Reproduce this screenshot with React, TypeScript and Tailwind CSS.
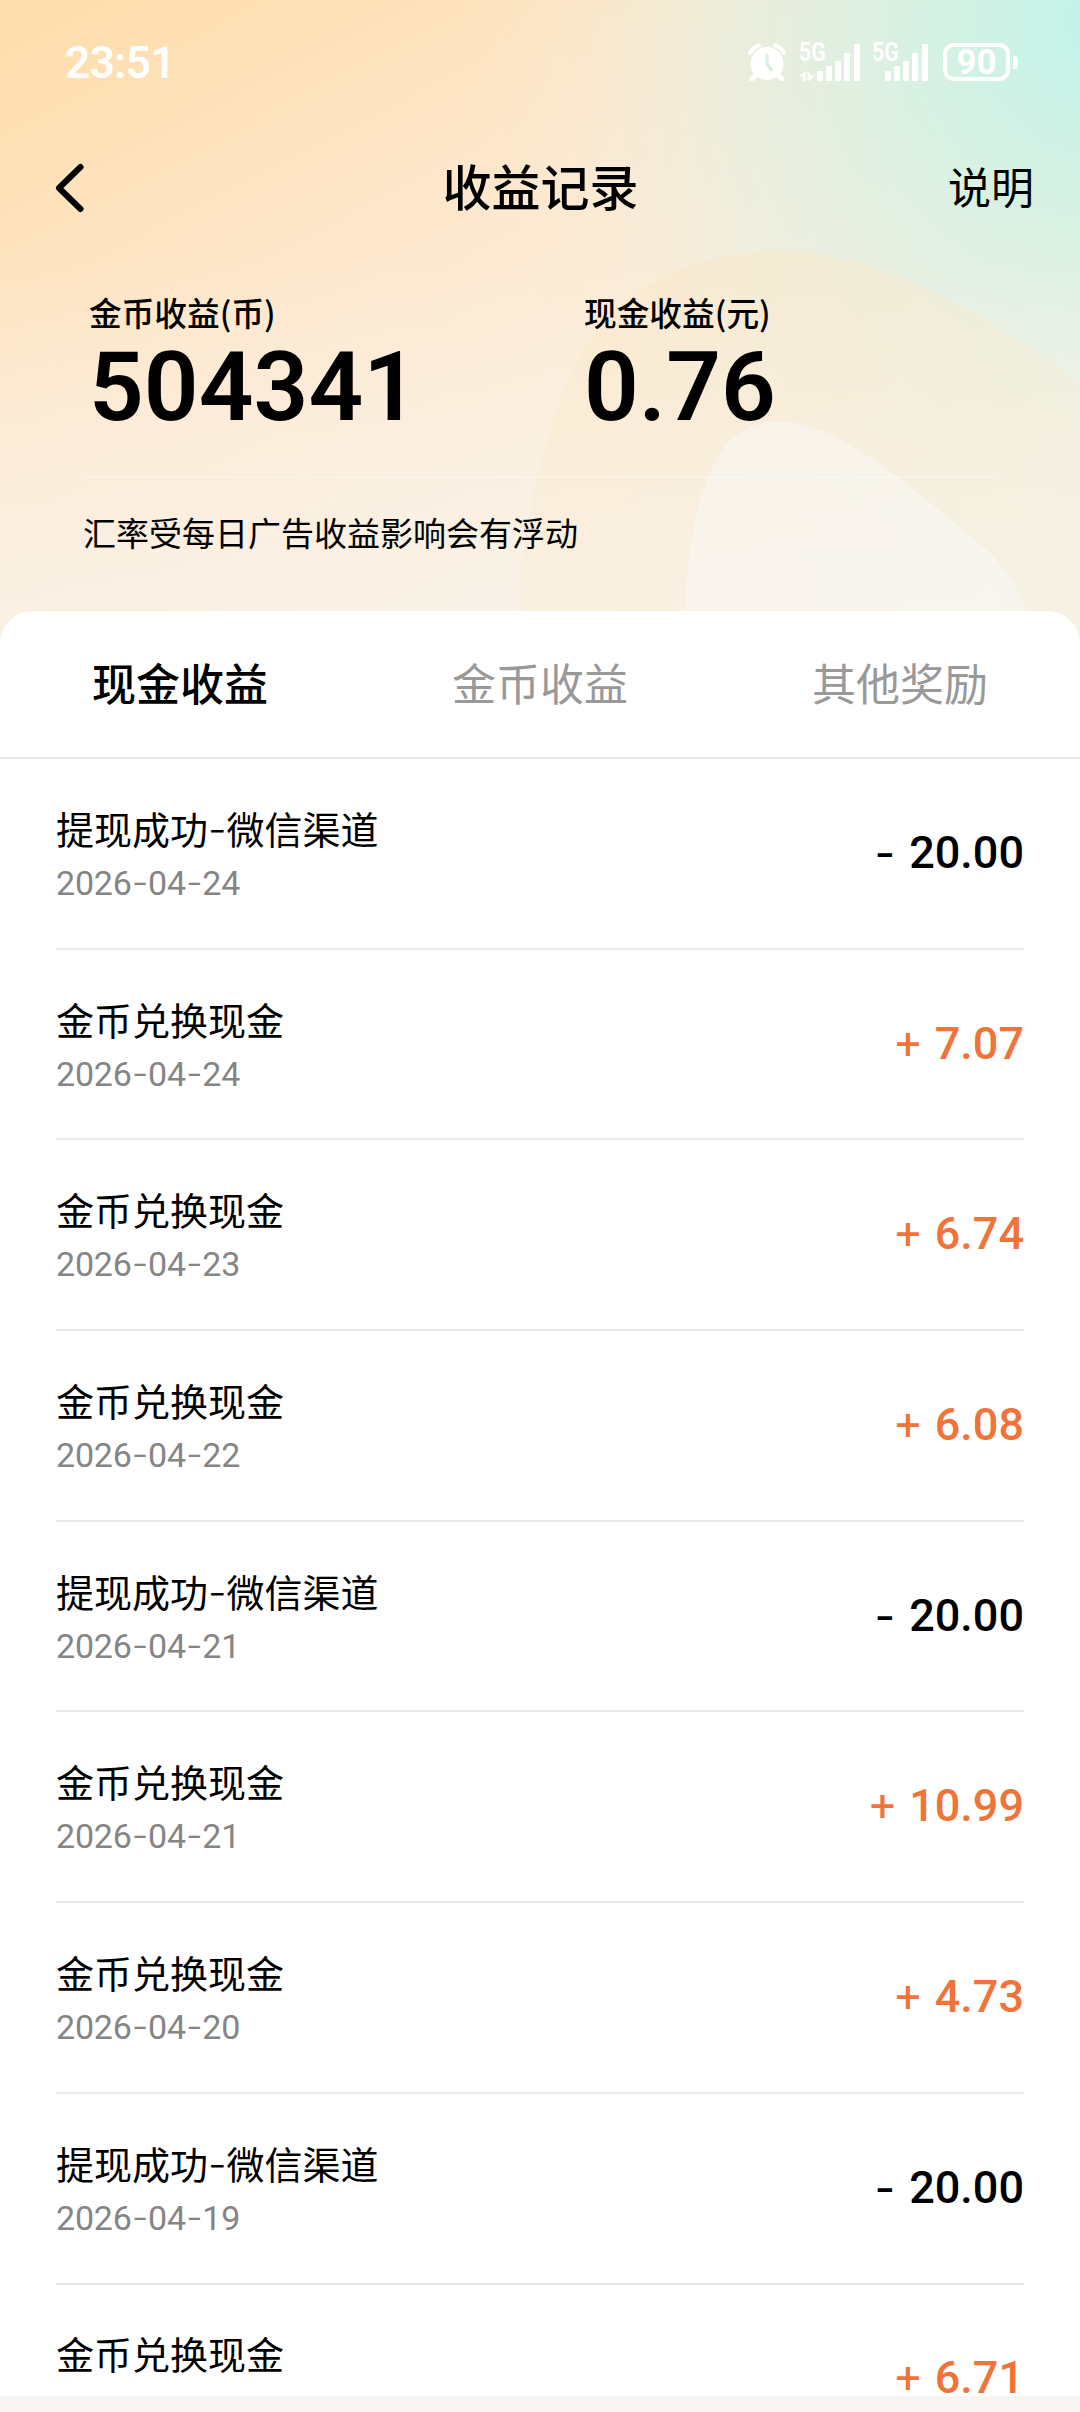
import { Fragment } from "react";
import clsx from "clsx";

type RecordItem = {
    title: string;
    date: string;
    amount: string;
    income: boolean;
};

const tabs = ["现金收益", "金币收益", "其他奖励"];

const records: RecordItem[] = [
    { title: "提现成功-微信渠道", date: "2026-04-24", amount: "20.00", income: false },
    { title: "金币兑换现金", date: "2026-04-24", amount: "7.07", income: true },
    { title: "金币兑换现金", date: "2026-04-23", amount: "6.74", income: true },
    { title: "金币兑换现金", date: "2026-04-22", amount: "6.08", income: true },
    { title: "提现成功-微信渠道", date: "2026-04-21", amount: "20.00", income: false },
    { title: "金币兑换现金", date: "2026-04-21", amount: "10.99", income: true },
    { title: "金币兑换现金", date: "2026-04-20", amount: "4.73", income: true },
    { title: "提现成功-微信渠道", date: "2026-04-19", amount: "20.00", income: false },
    { title: "金币兑换现金", date: "2026-04-19", amount: "6.71", income: true },
];

// Inter has the wider hyphen, the rest keeps the parent font
function Hyphenated({ text }: { text: string }) {
    return (
        <>
            {text.split("-").map((part, i) => (
                <Fragment key={i}>
                    {i > 0 && <span className="font-[Inter,sans-serif] text-[1.08em] leading-none font-light">-</span>}
                    {part}
                </Fragment>
            ))}
        </>
    );
}

function Signal({ data }: { data?: boolean }) {
    return (
        <div className={clsx("relative flex h-[37px] justify-end", data ? "w-[61px]" : "w-[56px]")}>
            {data && (
                <svg viewBox="0 0 16 10" className="absolute bottom-0 left-0 h-[10px] w-[16px]" fill="currentColor">
                    <path d="M0 5.500L6.500 0v10H4V5.500zM8.500 0v10h1.500l6-5.500h-3z" />
                </svg>
            )}
            <svg viewBox="0 0 43 37" className="h-[37px] w-[43px]" fill="currentColor">
                <rect x="0" y="27" width="6" height="10" rx="1" />
                <rect x="9" y="22" width="6" height="15" rx="1" />
                <rect x="18" y="17" width="6" height="20" rx="1" />
                <rect x="27" y="9" width="6" height="28" rx="1" />
                <rect x="37" y="0" width="6" height="37" rx="1" />
            </svg>
            <span className="absolute -top-px left-0 origin-left scale-x-[0.85] text-[25px] leading-[20px] font-bold">
                5G
            </span>
        </div>
    );
}

function StatusBar() {
    return (
        <div className="flex h-[124px] items-center justify-between pr-[62px] pl-[65px] text-white">
            <span className="pt-[2px] text-[44px] leading-none font-semibold tracking-[-0.500px]">23:51</span>
            <div className="flex items-center">
                <svg viewBox="0 0 38 38" className="mr-[13px] h-[38px] w-[38px]" fill="none" stroke="currentColor">
                    <circle cx="19" cy="20.500" r="16.500" fill="currentColor" stroke="none" />
                    <path d="M2 10Q5 4 11 2.500M27 2.500Q33 4 36 10" strokeWidth="4" strokeLinecap="round" />
                    <path d="M8 32l-4 4M30 32l4 4" strokeWidth="5" strokeLinecap="round" />
                    <path d="M19 12v9l4.500 6" stroke="#d9efdf" strokeWidth="3" strokeLinecap="round" />
                </svg>
                <div className="mr-[12px]">
                    <Signal data />
                </div>
                <div className="mr-[15px]">
                    <Signal />
                </div>
                <div className="flex h-[38px] w-[67px] items-center justify-center rounded-[11px] border-[4px] border-white text-[35px] leading-none font-bold">
                    90
                </div>
                <div className="ml-[3px] h-[13px] w-[5px] rounded-r-[3px] bg-white" />
            </div>
        </div>
    );
}

function HeaderBackdrop() {
    return (
        <svg
            viewBox="0 0 1080 660"
            className="absolute inset-x-0 top-0 h-[660px] w-[1080px]"
            fill="none"
        >
            <defs>
                <linearGradient id="base" x1="80" y1="0" x2="420" y2="660" gradientUnits="userSpaceOnUse">
                    <stop offset="0" stopColor="#ffdead" />
                    <stop offset="0.500" stopColor="#fde8ce" />
                    <stop offset="1" stopColor="#faf1e4" />
                </linearGradient>
                <radialGradient id="mint" cx="0" cy="0" r="1" gradientUnits="userSpaceOnUse" gradientTransform="translate(1110 20) rotate(90) scale(640 640)">
                    <stop offset="0" stopColor="#c0f3ec" />
                    <stop offset="0.300" stopColor="#d2f2e4" stopOpacity="0.900" />
                    <stop offset="0.600" stopColor="#e3f0e4" stopOpacity="0.650" />
                    <stop offset="0.850" stopColor="#f2eedd" stopOpacity="0.220" />
                    <stop offset="1" stopColor="#f8ebd6" stopOpacity="0" />
                </radialGradient>
                <linearGradient id="hill" x1="600" y1="400" x2="1080" y2="400" gradientUnits="userSpaceOnUse">
                    <stop offset="0" stopColor="#fae8c9" stopOpacity="0.650" />
                    <stop offset="1" stopColor="#f0ecd6" stopOpacity="0.700" />
                </linearGradient>
                <linearGradient id="floor" x1="0" y1="260" x2="0" y2="640" gradientUnits="userSpaceOnUse">
                    <stop offset="0" stopColor="#f9f3ea" stopOpacity="0" />
                    <stop offset="1" stopColor="#f9f3ea" stopOpacity="0.700" />
                </linearGradient>
            </defs>
            <path fill="url(#base)" d="M0 0h1080v660H0z" />
            <path fill="url(#mint)" d="M0 0h1080v660H0z" />
            <path
                fill="url(#hill)"
                d="M515 660C518 560 532 460 576 362C620 280 700 251 785 251C870 253 975 305 1080 383V660Z"
            />
            <path fill="url(#floor)" d="M0 0h1080v660H0z" />
            <path
                fill="#fafafa"
                fillOpacity="0.500"
                d="M685 660C683 570 692 500 722 450C740 426 762 420 785 421C845 428 905 482 978 542C1012 572 1030 600 1034 660Z"
            />
        </svg>
    );
}

function Stat({ label, value }: { label: string; value: string }) {
    return (
        <div className="w-[495px]">
            <div className="font-['Noto_Sans_CJK_SC',sans-serif] text-[32.700px] leading-[40px] font-medium">{label}</div>
            <div className="mt-[5px] text-[96px] leading-[100px] font-semibold">{value}</div>
        </div>
    );
}

function RecordRow({ item }: { item: RecordItem }) {
    return (
        <li className="flex h-[190.700px] shrink-0 items-center justify-between border-b-2 border-[#e8e8e8]">
            <div className="pt-[3px]">
                <div className="h-[54px] font-['Noto_Sans_CJK_SC',sans-serif] text-[38px] leading-[53px]">
                    <Hyphenated text={item.title} />
                </div>
                <div className="h-[54px] text-[34px] leading-[57px] tracking-[-0.200px] text-[#858585]">
                    <Hyphenated text={item.date} />
                </div>
            </div>
            <div
                className={clsx(
                    "flex items-center gap-[14px] pb-[2px] text-[45px] leading-none font-medium",
                    item.income ? "text-[#f0743a]" : "text-black"
                )}
            >
                <span className={item.income ? "font-normal" : "font-[Inter,sans-serif] font-normal"}>
                    {item.income ? "+" : "-"}
                </span>
                <span>{item.amount}</span>
            </div>
        </li>
    );
}

export default function App() {
    return (
        <div className="flex h-[2412px] w-[1080px] flex-col overflow-hidden bg-[#f7f6f4] font-[Roboto,'Noto_Sans_CJK_SC',sans-serif] text-black">
            <header className="relative h-[611px] shrink-0">
                <HeaderBackdrop />
                <div className="relative">
                    <StatusBar />
                    <nav className="grid h-[128px] grid-cols-3 items-center pr-[46px] pl-[54px] font-['Noto_Sans_CJK_SC',sans-serif]">
                        <svg viewBox="0 0 32 52" className="h-[52px] w-[32px]" fill="none" stroke="#000" strokeWidth="6" strokeLinecap="round" strokeLinejoin="round">
                            <path d="M26.500 5L5 26l21.500 21" />
                        </svg>
                        <h1 className="pr-[7px] pb-[7px] text-center text-[49px] leading-none font-medium whitespace-nowrap">收益记录</h1>
                        <span className="pb-[5px] text-right text-[43px] leading-none">说明</span>
                    </nav>
                    <div className="mt-[40px] flex pl-[89px]">
                        <Stat label="金币收益(币)" value="504341" />
                        <Stat label="现金收益(元)" value="0.76" />
                    </div>
                    <div className="mx-[83px] mt-[39px] h-[2px] bg-white/25" />
                    <p className="mt-[30px] pl-[83px] font-['Noto_Sans_CJK_SC',sans-serif] text-[33px] leading-[48px]">
                        汇率受每日广告收益影响会有浮动
                    </p>
                </div>
            </header>

            <main className="relative flex h-[1785px] shrink-0 flex-col overflow-hidden rounded-t-[33px] bg-white">
                <div className="grid h-[148px] shrink-0 grid-cols-3 items-center border-b-2 border-[#e8e8e8] pb-[4px] font-['Noto_Sans_CJK_SC',sans-serif] text-[44px] leading-none">
                    {tabs.map((tab, i) => (
                        <button key={tab} className={i === 0 ? "font-medium" : "text-[#999999]"}>
                            {tab}
                        </button>
                    ))}
                </div>
                <ul className="flex flex-col px-[56px]">
                    {records.map((item, i) => (
                        <RecordRow key={i} item={item} />
                    ))}
                </ul>
            </main>
        </div>
    );
}
